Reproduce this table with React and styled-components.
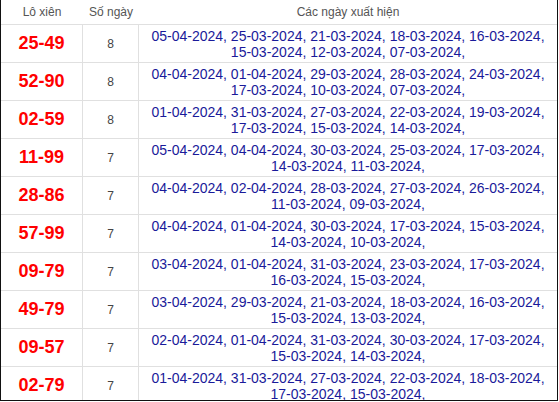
import React from 'react'
import styled, { createGlobalStyle } from 'styled-components'

const GlobalStyle = createGlobalStyle`
  html, body {
    margin: 0;
    padding: 0;
    background: #fff;
  }
  body {
    font-family: 'Liberation Sans', Arial, sans-serif;
  }
`

const rows = [
  ['25-49', 8, ['05-04-2024', '25-03-2024', '21-03-2024', '18-03-2024', '16-03-2024', '15-03-2024', '12-03-2024', '07-03-2024']],
  ['52-90', 8, ['04-04-2024', '01-04-2024', '29-03-2024', '28-03-2024', '24-03-2024', '17-03-2024', '10-03-2024', '07-03-2024']],
  ['02-59', 8, ['01-04-2024', '31-03-2024', '27-03-2024', '22-03-2024', '19-03-2024', '17-03-2024', '15-03-2024', '14-03-2024']],
  ['11-99', 7, ['05-04-2024', '04-04-2024', '30-03-2024', '25-03-2024', '17-03-2024', '14-03-2024', '11-03-2024']],
  ['28-86', 7, ['04-04-2024', '02-04-2024', '28-03-2024', '27-03-2024', '26-03-2024', '11-03-2024', '09-03-2024']],
  ['57-99', 7, ['04-04-2024', '01-04-2024', '30-03-2024', '17-03-2024', '15-03-2024', '14-03-2024', '10-03-2024']],
  ['09-79', 7, ['03-04-2024', '01-04-2024', '31-03-2024', '23-03-2024', '17-03-2024', '16-03-2024', '15-03-2024']],
  ['49-79', 7, ['03-04-2024', '29-03-2024', '21-03-2024', '18-03-2024', '16-03-2024', '15-03-2024', '13-03-2024']],
  ['09-57', 7, ['02-04-2024', '01-04-2024', '31-03-2024', '30-03-2024', '17-03-2024', '15-03-2024', '14-03-2024']],
  ['02-79', 7, ['01-04-2024', '31-03-2024', '27-03-2024', '22-03-2024', '18-03-2024', '17-03-2024', '15-03-2024']],
]

const Frame = styled.div`
  width: 556px;
  height: 400px;
  overflow: hidden;
  border-left: 1px solid #111;
  border-right: 1px solid #111;
  border-bottom: 1px solid #111;
`

const Grid = styled.div`
  display: grid;
  grid-template-columns: 82px 56px 1fr;
`

const Head = styled.div`
  height: 25px;
  box-sizing: border-box;
  border-bottom: 1px solid #e0e0e0;
  display: flex;
  align-items: center;
  justify-content: center;
  font-size: 12px;
  color: #555;
`

const Cell = styled.div`
  height: 38px;
  box-sizing: border-box;
  border-bottom: 1px solid #e0e0e0;
  border-right: ${(p) => (p.$last ? 'none' : '1px solid #e0e0e0')};
  display: flex;
  align-items: center;
  justify-content: center;
  text-align: center;
`

const Pair = styled.span`
  font-size: 18px;
  font-weight: bold;
  color: #f00;
`

const Count = styled.span`
  font-size: 12px;
  color: #444;
`

const Dates = styled.span`
  font-size: 14px;
  line-height: 16px;
  color: #1a1a9a;
  padding: 0 4px;
`

export default function App() {
  return (
    <>
      <GlobalStyle />
      <Frame>
        <Grid>
          <Head>Lô xiên</Head>
          <Head>Số ngày</Head>
          <Head>Các ngày xuất hiện</Head>
          {rows.map(([pair, count, dates]) => (
            <React.Fragment key={pair}>
              <Cell>
                <Pair>{pair}</Pair>
              </Cell>
              <Cell>
                <Count>{count}</Count>
              </Cell>
              <Cell $last>
                <Dates>{dates.join(', ') + ','}</Dates>
              </Cell>
            </React.Fragment>
          ))}
        </Grid>
      </Frame>
    </>
  )
}
